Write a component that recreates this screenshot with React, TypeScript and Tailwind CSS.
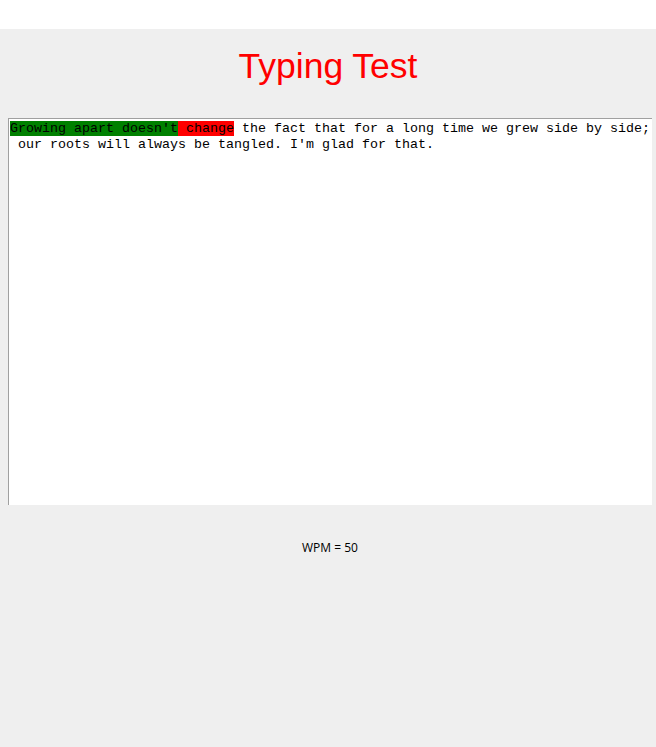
export default function App() {
  const mono = { fontFamily: '"Liberation Mono", "Courier New", monospace' };
  return (
    <div className="w-[656px] h-[747px] bg-white">
      <div className="h-[29px] bg-white" />
      <div className="h-[718px] bg-[#efefef] flex flex-col items-center">
        <div
          className="mt-[17px] h-[40px] leading-[40px] text-[35.5px] text-[#ff0000]"
          style={{ fontFamily: '"Liberation Sans", Arial, sans-serif' }}
        >
          Typing Test
        </div>
        <div className="mt-[32px] self-start ml-[8px] w-[644px] h-[387px] bg-white border-l border-t border-[#a0a0a0] pt-[2px] pl-[1px]">
          <div className="text-[13.33px] leading-[16px] text-black whitespace-pre" style={mono}>
            <div>
              <span className="bg-[#008000]">Growing apart doesn't</span>
              <span className="bg-[#ff0000]"> change</span>
              <span> the fact that for a long time we grew side by side;</span>
            </div>
            <div> our roots will always be tangled. I'm glad for that.</div>
          </div>
        </div>
        <div
          className="mt-[35px] ml-[4px] text-[12px] leading-[16px] text-black"
          style={{ fontFamily: '"Open Sans", "Noto Sans", sans-serif' }}
        >
          WPM = 50
        </div>
      </div>
    </div>
  );
}
